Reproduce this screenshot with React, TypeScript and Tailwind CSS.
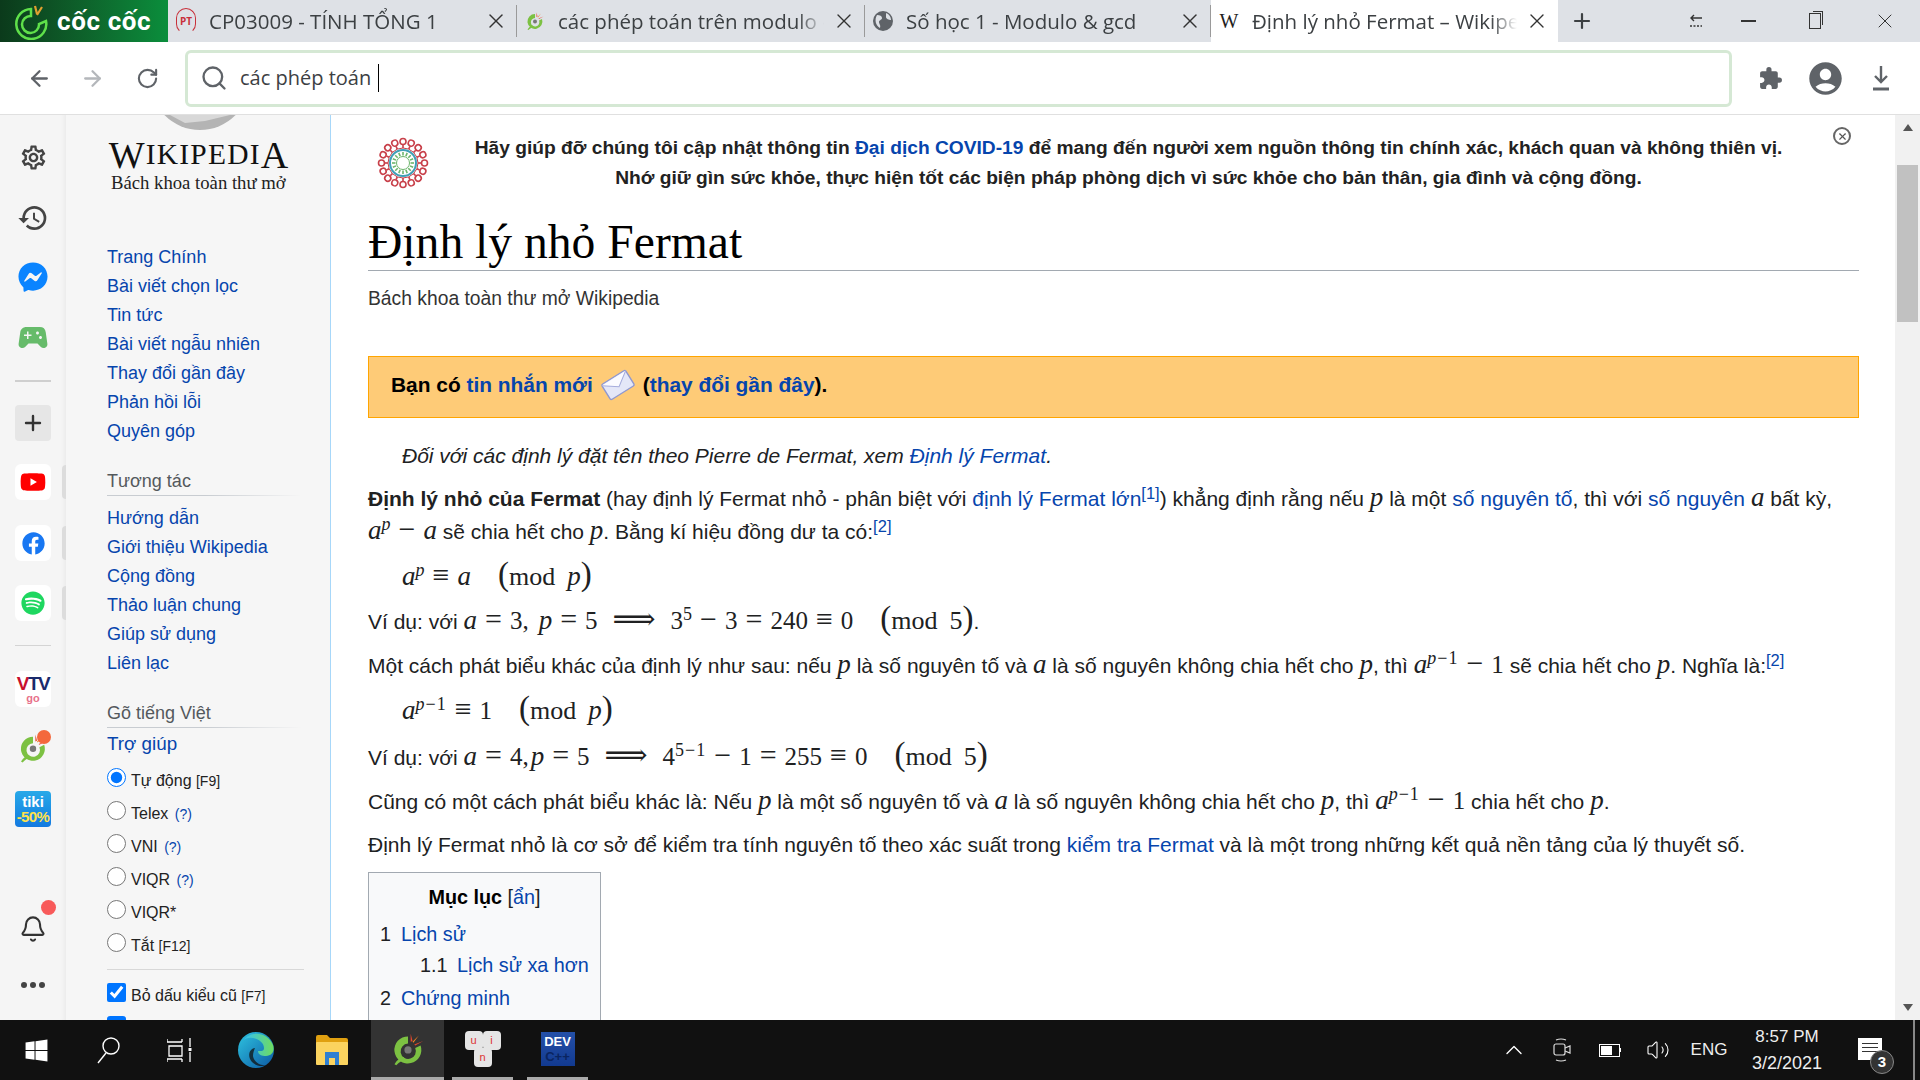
import React from "react";
import { ArrowLeft, ArrowRight, RotateCw, Search, Plus, Bell, X, ChevronUp, Volume2 } from "lucide-react";
import { MdExtension, MdAccountCircle, MdOutlineSettings, MdHistory, MdSportsEsports } from "react-icons/md";
import { FaFacebookMessenger, FaFacebook, FaSpotify, FaYoutube, FaWindows } from "react-icons/fa";

const Link = ({ children, className = "" }: { children: React.ReactNode; className?: string }) => (
  <span className={"text-[#0645ad] " + className}>{children}</span>
);
const I = ({ children, className = "" }: { children: React.ReactNode; className?: string }) => (
  <span className={"font-['Liberation_Serif','DejaVu_Serif',serif] italic text-[27px] leading-none " + className}>{children}</span>
);
const R = ({ children, className = "" }: { children: React.ReactNode; className?: string }) => (
  <span className={"font-['Liberation_Serif','DejaVu_Serif',serif] text-[25px] leading-none " + className}>{children}</span>
);
const Op = ({ children, wide }: { children: React.ReactNode; wide?: boolean }) => (
  <span className={"font-['Liberation_Serif','DejaVu_Serif',serif] text-[30px] leading-none " + (wide ? "mx-[15px]" : "mx-[8px]")}>{children}</span>
);
const Mod = ({ children }: { children: React.ReactNode }) => (
  <span className="ml-[27px] font-['Liberation_Serif','DejaVu_Serif',serif] leading-none">
    <span className="text-[33px] font-light leading-none">(</span>
    <span className="text-[26px] leading-none">mod</span>
    <span className="ml-[12px] text-[26px] leading-none">{children}</span>
    <span className="text-[33px] font-light leading-none">)</span>
  </span>
);
const Sup = ({ children, spaced }: { children: React.ReactNode; spaced?: boolean }) => (
  <sup className={"relative -top-[9px] align-baseline font-['Liberation_Serif','DejaVu_Serif',serif] text-[18px] leading-none " + (spaced ? "tracking-[1px]" : "")}>{children}</sup>
);
const Ref = ({ n }: { n: number }) => <sup className="relative -top-[7px] align-baseline text-[16.5px] leading-none text-[#0645ad]">[{n}]</sup>;

function CocIcon({ size = 40 }: { size?: number }) {
  return (
    <svg width={size} height={size} viewBox="0 0 40 40">
      <path d="M20 6a15 15 0 1 0 14 10l-6 3a8.5 8.5 0 1 1-8-5z" fill="#7cc142" />
      <path d="M5 37c3-5 6-7 10-8l2 3c-4 1-7 3-10 6z" fill="#7cc142" />
      <circle cx="20" cy="21" r="4" fill="#777" />
      <path d="M23 3l2 8-2 1z" fill="#e8472b" />
      <path d="M32 5l-6 8-1-1z" fill="#f58220" />
      <path d="M37 11l-9 5-1-1z" fill="#e8472b" />
    </svg>
  );
}

function Tab({ w, fav, title, active }: { w: string; fav: React.ReactNode; title: string; active?: boolean }) {
  return (
    <div className={"relative flex h-full shrink-0 items-center pl-[8px] " + w + (active ? " bg-white" : "")}>
      <div className="flex w-[20px] shrink-0 justify-center">{fav}</div>
      <div className="ml-[13px] min-w-0 flex-1 overflow-hidden whitespace-nowrap text-[20.5px] text-[#3c4043] [mask-image:linear-gradient(to_right,black_90%,transparent)]">{title}</div>
      <X size={24} strokeWidth={1.4} className="ml-[8px] mr-[9px] shrink-0 text-[#333]" />
      {!active && <div className="absolute right-0 top-[5px] h-[32px] w-px bg-[#9a9a9a]" />}
    </div>
  );
}

function Slot({ className, children }: { className: string; children: React.ReactNode }) {
  return <div className={"flex h-[36px] w-[36px] items-center justify-center self-center " + className}>{children}</div>;
}

function Handle() {
  return <div className="absolute left-[62px] top-[1px] h-[34px] w-[4px] rounded-l bg-[#dcdcdc]" />;
}

function Rail() {
  return (
    <div className="relative flex w-[66px] shrink-0 flex-col bg-[#f5f5f5] shadow-[inset_-6px_0_6px_-6px_rgba(0,0,0,0.08)]">
      <Slot className="mt-[24px]"><MdOutlineSettings size={29} className="text-[#444]" /></Slot>
      <Slot className="mt-[25px]"><MdHistory size={32} className="text-[#444]" /></Slot>
      <Slot className="mt-[23px]"><FaFacebookMessenger size={30} className="text-[#0a84ff]" /></Slot>
      <Slot className="mt-[24px]"><MdSportsEsports size={37} className="text-[#66bb6a]" /></Slot>
      <div className="mx-[15px] mt-[25px] h-[2px] bg-[#cfcfcf]" />
      <Slot className="mt-[23px] rounded bg-[#e6e6e6]"><Plus size={24} strokeWidth={2.4} className="text-[#333]" /></Slot>
      <div className="relative mt-[23px] flex justify-center">
        <Slot className="rounded-md bg-white"><FaYoutube size={26} className="text-[#ff0000]" /></Slot><Handle />
      </div>
      <div className="relative mt-[25px] flex justify-center">
        <Slot className="rounded-md bg-white"><FaFacebook size={23} className="text-[#1877f2]" /></Slot><Handle />
      </div>
      <div className="relative mt-[24px] flex justify-center">
        <Slot className="rounded-md bg-white"><FaSpotify size={24} className="text-[#1ed760]" /></Slot><Handle />
      </div>
      <div className="mx-[15px] mt-[24px] h-px bg-[#d4d4d4]" />
      <Slot className="mt-[25px] rounded-md bg-white">
        <div className="flex flex-col items-center leading-none">
          <span className="font-['Liberation_Sans'] text-[19px] font-bold tracking-[-1.5px] text-[#c8102e]">V<span className="text-[#1a2a6c]">TV</span></span>
          <span className="text-[11px] font-bold text-[#e8718a]">go</span>
        </div>
      </Slot>
      <Slot className="relative mt-[23px]">
        <CocIcon size={32} />
        <div className="absolute right-0 top-0 h-[14px] w-[14px] rounded-full bg-[#f4683c]" />
      </Slot>
      <Slot className="mt-[25px] rounded bg-gradient-to-b from-[#29a9e8] to-[#1479e0]">
        <div className="flex flex-col items-center font-['Liberation_Sans'] font-bold leading-none">
          <span className="text-[15px] text-white">tiki</span>
          <span className="text-[15px] tracking-[-0.6px] text-[#ffe14d]">-50%</span>
        </div>
      </Slot>
      <Slot className="relative mt-[84px]">
        <Bell size={28} strokeWidth={1.8} className="text-[#333]" />
        <div className="absolute right-[-5px] top-[-11px] h-[15px] w-[15px] rounded-full bg-[#f85a5a]" />
      </Slot>
      <div className="mt-[35px] flex justify-center gap-[3px]">
        <div className="h-[6px] w-[6px] rounded-full bg-[#444]" />
        <div className="h-[6px] w-[6px] rounded-full bg-[#444]" />
        <div className="h-[6px] w-[6px] rounded-full bg-[#444]" />
      </div>
    </div>
  );
}

function NavRow({ children }: { children: React.ReactNode }) {
  return <div className="flex h-[29px] items-center whitespace-nowrap text-[18px] text-[#0645ad]">{children}</div>;
}
function NavHead({ className, children }: { className: string; children: React.ReactNode }) {
  return (
    <div className={"relative flex h-[29px] items-center text-[18px] text-[#54595d] " + className}>
      {children}
      <div className="absolute bottom-0 left-0 h-px w-[195px] bg-gradient-to-r from-[#c8ccd1] via-[#c8ccd1] to-transparent" />
    </div>
  );
}
function RadioRow({ checked, children }: { checked?: boolean; children: React.ReactNode }) {
  return (
    <div className="flex h-[33px] items-center whitespace-nowrap text-[16px] text-[#222]">
      <input type="radio" name="tv" defaultChecked={checked} className="m-0 -mt-[7px] h-[19px] w-[19px]" />
      <span className="ml-[5px]">{children}</span>
    </div>
  );
}
const Q = () => <span className="ml-[2px] text-[14px] text-[#0645ad]">(?)</span>;

function WikiPanel() {
  return (
    <div className="w-[265px] shrink-0 border-r border-[#a7d7f9] bg-[#f6f6f6] pl-[41px]">
      <div className="ml-[43px] h-[15px] w-[100px] overflow-hidden">
        <svg width="100" height="15" viewBox="0 0 100 15">
          <circle cx="50" cy="-35" r="50" fill="#b4b4b4" />
          <path d="M20 0l15 8 20-2 25-6z" fill="#d8d8d8" />
        </svg>
      </div>
      <div className="ml-[1px] mt-[7px] flex h-[35px] w-[182px] items-center justify-center whitespace-nowrap font-['Liberation_Serif',serif] text-[38px] leading-none tracking-[1.2px] text-[#111]">
        W<span className="text-[29.5px]">IKIPEDI</span>A
      </div>
      <div className="ml-[4px] flex h-[22px] items-center whitespace-nowrap font-['Liberation_Serif',serif] text-[18.7px] text-[#222]">Bách khoa toàn thư mở</div>
      <div className="mt-[49px]">
        <NavRow>Trang Chính</NavRow>
        <NavRow>Bài viết chọn lọc</NavRow>
        <NavRow>Tin tức</NavRow>
        <NavRow>Bài viết ngẫu nhiên</NavRow>
        <NavRow>Thay đổi gần đây</NavRow>
        <NavRow>Phản hồi lỗi</NavRow>
        <NavRow>Quyên góp</NavRow>
      </div>
      <NavHead className="mt-[21px]">Tương tác</NavHead>
      <div className="mt-[8px]">
        <NavRow>Hướng dẫn</NavRow>
        <NavRow>Giới thiệu Wikipedia</NavRow>
        <NavRow>Cộng đồng</NavRow>
        <NavRow>Thảo luận chung</NavRow>
        <NavRow>Giúp sử dụng</NavRow>
        <NavRow>Liên lạc</NavRow>
      </div>
      <NavHead className="mt-[21px]">Gõ tiếng Việt</NavHead>
      <div className="mt-[2px]"><NavRow><span className="text-[18.8px]">Trợ giúp</span></NavRow></div>
      <div className="mt-[5px]">
        <RadioRow checked>Tự động <span className="text-[14px]">[F9]</span></RadioRow>
        <RadioRow>Telex <Q /></RadioRow>
        <RadioRow>VNI <Q /></RadioRow>
        <RadioRow>VIQR <Q /></RadioRow>
        <RadioRow>VIQR*</RadioRow>
        <RadioRow>Tắt <span className="text-[14px]">[F12]</span></RadioRow>
      </div>
      <div className="mt-[7px] h-px w-[197px] bg-[#d8d8d8]" />
      <div className="mt-[9px] flex h-[34px] items-center whitespace-nowrap text-[16px] text-[#222]">
        <input type="checkbox" defaultChecked className="m-0 -mt-[8px] h-[19px] w-[19px]" />
        <span className="ml-[5px]">Bỏ dấu kiểu cũ <span className="text-[14px]">[F7]</span></span>
      </div>
      <div className="mt-[3px] h-[19px] w-[19px] rounded-[3px] bg-[#0075ff]" />
    </div>
  );
}

function Virus() {
  const n = 16;
  return (
    <svg width="52" height="52" viewBox="-26 -26 52 52">
      {Array.from({ length: n }).map((_, i) => (
        <g key={i} transform={`rotate(${(i * 360) / n})`}>
          <circle cx="0" cy="-21.5" r="3" fill="none" stroke="#c8404a" strokeWidth="1.6" />
          <line x1="0" y1="-18" x2="0" y2="-15" stroke="#c8404a" strokeWidth="1.6" />
          <line x1="0" y1="-11" x2="0" y2="-7.5" stroke="#6cb56c" strokeWidth="1.6" />
        </g>
      ))}
      <circle r="15" fill="none" stroke="#c8404a" strokeWidth="1" />
      <circle r="13" fill="none" stroke="#3f9fb8" strokeWidth="2" />
      <circle r="6.5" fill="none" stroke="#6cb56c" strokeWidth="1" />
    </svg>
  );
}

function Envelope() {
  return (
    <svg width="36" height="36" viewBox="0 0 36 36" className="mx-[7px] shrink-0">
      <g transform="rotate(-32 18 18)">
        <rect x="4" y="9" width="28" height="18" rx="1.5" fill="#e4e7f8" stroke="#8f98d0" strokeWidth="1.4" />
        <path d="M4 10l14 10 14-10" fill="#fbfbff" stroke="#a5acdc" strokeWidth="1" />
      </g>
    </svg>
  );
}

function Article() {
  return (
    <div className="min-w-0 flex-1 bg-white pl-[37px] pr-[36px] text-[21px] text-[#202122]">
      <div className="relative flex items-start pt-[18px]">
        <div className="absolute left-[9px] top-[22px]"><Virus /></div>
        <div className="w-full pl-[30px] text-center text-[19.2px] font-bold leading-[30px] text-[#222]">
          <div className="whitespace-nowrap">Hãy giúp đỡ chúng tôi cập nhật thông tin <Link>Đại dịch COVID-19</Link> để mang đến người xem nguồn thông tin chính xác, khách quan và không thiên vị.</div>
          <div className="whitespace-nowrap">Nhớ giữ gìn sức khỏe, thực hiện tốt các biện pháp phòng dịch vì sức khỏe cho bản thân, gia đình và cộng đồng.</div>
        </div>
        <div className="absolute right-[8px] top-[12px] flex h-[18px] w-[18px] items-center justify-center rounded-full border-2 border-[#666] bg-white">
          <X size={11} strokeWidth={2.5} className="text-[#555]" />
        </div>
      </div>
      <h1 className="mt-[22px] flex h-[56px] items-center whitespace-nowrap border-b border-[#a2a9b1] font-['Liberation_Serif',serif] text-[47.6px] leading-none text-black">Định lý nhỏ Fermat</h1>
      <div className="mt-[16px] flex h-[24px] items-center text-[19.3px] text-[#333]">Bách khoa toàn thư mở Wikipedia</div>
      <div className="mt-[45px] flex h-[62px] items-center border border-[#ffa500] bg-[#fecb77] pb-[4px] pl-[22px] text-[20.9px] font-bold text-black">
        Bạn có&nbsp;<Link>tin nhắn mới</Link><Envelope />(<Link>thay đổi gần đây</Link>).
      </div>
      <div className="mt-[26px] flex h-[26px] items-center whitespace-nowrap pb-[2px] pl-[34px] italic text-[#202122]">
        Đối với các định lý đặt tên theo Pierre de Fermat, xem&nbsp;<Link>Định lý Fermat</Link>.
      </div>
      <div className="mt-[12px] whitespace-nowrap leading-[33px]">
        <div><b>Định lý nhỏ của Fermat</b> (hay định lý Fermat nhỏ - phân biệt với <Link>định lý Fermat lớn</Link><Ref n={1} />) khẳng định rằng nếu <I>p</I> là một <Link>số nguyên tố</Link>, thì với <Link>số nguyên</Link> <I>a</I> bất kỳ,</div>
        <div className="-mt-[1px]"><I>a</I><Sup><i>p</i></Sup><Op>−</Op><I>a</I> sẽ chia hết cho <I>p</I>. Bằng kí hiệu đồng dư ta có:<Ref n={2} /></div>
      </div>
      <div className="mt-[12px] flex h-[36px] items-center whitespace-pre pb-[5px] pl-[34px]">
        <span><I>a</I><Sup><i>p</i></Sup><Op>≡</Op><I>a</I><Mod><I>p</I></Mod></span>
      </div>
      <div className="mt-[8px] flex h-[36px] items-center whitespace-pre pb-[5px]">
        <span>Ví dụ: với <I>a</I><Op>=</Op><R>3,</R><I className="ml-[10px]">p</I><Op>=</Op><R>5</R><Op wide>⟹</Op><R>3</R><Sup>5</Sup><Op>−</Op><R>3</R><Op>=</Op><R>240</R><Op>≡</Op><R>0</R><Mod>5</Mod>.</span>
      </div>
      <div className="mt-[10px] flex h-[36px] items-center whitespace-pre pb-[7px]">
        <span>Một cách phát biểu khác của định lý như sau: nếu <I>p</I> là số nguyên tố và <I>a</I> là số nguyên không chia hết cho <I>p</I>, thì <I>a</I><Sup spaced><i>p</i>−1</Sup><Op>−</Op><R>1</R> sẽ chia hết cho <I>p</I>. Nghĩa là:<Ref n={2} /></span>
      </div>
      <div className="mt-[7px] flex h-[36px] items-center whitespace-pre pb-[2px] pl-[34px]">
        <span><I>a</I><Sup spaced><i>p</i>−1</Sup><Op>≡</Op><R>1</R><Mod><I>p</I></Mod></span>
      </div>
      <div className="mt-[10px] flex h-[36px] items-center whitespace-pre pb-[2px]">
        <span>Ví dụ: với <I>a</I><Op>=</Op><R>4,</R><I className="ml-[2px]">p</I><Op>=</Op><R>5</R><Op wide>⟹</Op><R>4</R><Sup spaced>5−1</Sup><Op>−</Op><R>1</R><Op>=</Op><R>255</R><Op>≡</Op><R>0</R><Mod>5</Mod></span>
      </div>
      <div className="mt-[10px] flex h-[36px] items-center whitespace-pre pb-[5px]">
        <span>Cũng có một cách phát biểu khác là: Nếu <I>p</I> là một số nguyên tố và <I>a</I> là số nguyên không chia hết cho <I>p</I>, thì <I>a</I><Sup spaced><i>p</i>−1</Sup><Op>−</Op><R>1</R> chia hết cho <I>p</I>.</span>
      </div>
      <div className="mt-[10px] flex h-[30px] items-center whitespace-pre pb-[2px]">
        <span>Định lý Fermat nhỏ là cơ sở để kiểm tra tính nguyên tố theo xác suất trong <Link>kiểm tra Fermat</Link> và là một trong những kết quả nền tảng của lý thuyết số.</span>
      </div>
      <div className="mt-[11px] w-[233px] border border-[#a2a9b1] bg-[#f8f9fa] pb-[20px] text-[19.8px]">
        <div className="mt-[12px] flex h-[26px] items-center justify-center"><b className="text-black">Mục lục</b>&nbsp;[<Link>ẩn</Link>]</div>
        <div className="mt-[10px] flex h-[28px] items-center pl-[11px]"><span className="w-[21px]">1</span><Link>Lịch sử</Link></div>
        <div className="mt-[3px] flex h-[28px] items-center pl-[51px]"><span className="w-[37px]">1.1</span><Link>Lịch sử xa hơn</Link></div>
        <div className="mt-[5px] flex h-[28px] items-center pl-[11px]"><span className="w-[21px]">2</span><Link>Chứng minh</Link></div>
      </div>
    </div>
  );
}

function Scrollbar() {
  return (
    <div className="flex w-[25px] shrink-0 flex-col items-center bg-[#f1f1f1]">
      <div className="mt-[9px] h-0 w-0 border-x-[5px] border-b-[7px] border-x-transparent border-b-[#555]" />
      <div className="mt-[34px] h-[157px] w-[21px] bg-[#c1c1c1]" />
      <div className="flex-1" />
      <div className="mb-[9px] h-0 w-0 border-x-[5px] border-t-[7px] border-x-transparent border-t-[#555]" />
    </div>
  );
}

function TrayIcon({ w, children }: { w: string; children: React.ReactNode }) {
  return <div className={"flex h-full shrink-0 items-center justify-center " + w}>{children}</div>;
}

function Taskbar() {
  return (
    <div className="flex h-[60px] shrink-0 items-stretch bg-[#111] text-white">
      <TrayIcon w="w-[72px]"><FaWindows size={25} /></TrayIcon>
      <TrayIcon w="w-[74px]">
        <svg width="26" height="28" viewBox="0 0 26 28" fill="none" stroke="#fff" strokeWidth="1.4"><circle cx="15" cy="10" r="8" /><path d="M10 17L2 27" /></svg>
      </TrayIcon>
      <TrayIcon w="w-[68px]">
        <svg width="26" height="24" viewBox="0 0 26 24" fill="none" stroke="#fff" strokeWidth="1.3"><path d="M0 4h15M0 1v3M15 1v3M2 8h13v10H2zM0 21h15M0 24v-3M15 24v-3M23 0v9M23 14v10" /><rect x="21.5" y="10" width="3" height="3" fill="#fff" stroke="none" /></svg>
      </TrayIcon>
      <TrayIcon w="ml-[6px] w-[72px]">
        <svg width="38" height="38" viewBox="0 0 38 38">
          <defs>
            <linearGradient id="eg" x1="0" y1="0" x2="1" y2="1"><stop offset="0" stopColor="#2ec4e0" /><stop offset="1" stopColor="#0c59a4" /></linearGradient>
            <linearGradient id="eg2" x1="0" y1="0" x2="1" y2="0"><stop offset="0" stopColor="#35c1f1" /><stop offset="1" stopColor="#6fdc5e" /></linearGradient>
          </defs>
          <circle cx="19" cy="19" r="18" fill="url(#eg)" />
          <path d="M7 9C13 0 30 0 36 14c2 6-1 11-7 11-4 0-8-1-8-5 2 0 6 1 6-3C27 8 12 4 7 9z" fill="url(#eg2)" />
          <path d="M18 17c-6 1-8 8-3 14 4 4 10 5 14 3-6 1-12-3-13-9 0-3 1-6 2-8z" fill="#111" opacity="0.75" />
        </svg>
      </TrayIcon>
      <TrayIcon w="ml-[4px] w-[72px]">
        <svg width="32" height="30" viewBox="0 0 32 30">
          <path d="M0 2q0-2 2-2h9l3 3h16q2 0 2 2v4H0z" fill="#e0a010" />
          <rect y="7" width="32" height="23" rx="1" fill="#fbd35f" />
          <rect x="9" y="17" width="14" height="13" fill="#2f7fd1" />
          <rect x="13" y="23" width="6" height="7" fill="#fbd35f" />
        </svg>
      </TrayIcon>
      <TrayIcon w="ml-[3px] w-[73px] bg-[#333] border-b-[3px] border-[#aaa]"><CocIcon size={36} /></TrayIcon>
      <TrayIcon w="ml-[8px] w-[61px] border-b-[3px] border-[#aaa]">
        <div className="relative h-[36px] w-[36px]">
          <div className="absolute left-0 top-0 flex h-[19px] w-[18px] items-center justify-center rounded-sm bg-[#e5e5e5] text-[11px] text-[#d33]">u</div>
          <div className="absolute right-0 top-0 flex h-[19px] w-[18px] items-center justify-center rounded-sm bg-[#e5e5e5] text-[11px] text-[#d33]">i</div>
          <div className="absolute bottom-0 left-[9px] flex h-[19px] w-[18px] items-center justify-center rounded-sm bg-[#e5e5e5] text-[11px] text-[#d33]">n</div>
        </div>
      </TrayIcon>
      <TrayIcon w="ml-[14px] w-[61px] border-b-[3px] border-[#aaa]">
        <div className="flex h-[34px] w-[34px] flex-col items-center justify-center bg-gradient-to-b from-[#2450a8] to-[#123a90] font-['Liberation_Sans'] text-[13px] font-bold leading-[15px]">
          <span className="text-white">DEV</span>
          <span className="text-[#0a2460]">C++</span>
        </div>
      </TrayIcon>
      <div className="flex-1" />
      <TrayIcon w="w-[48px]"><ChevronUp size={28} strokeWidth={1.2} /></TrayIcon>
      <TrayIcon w="w-[48px]">
        <svg width="18" height="24" viewBox="0 0 18 24" fill="none" stroke="#ddd" strokeWidth="1.2"><rect x="1" y="6" width="11" height="11" rx="2" /><path d="M12 10l5-2v7l-5-2M3 2q5-2 10 0M3 22q5 2 10 0" /></svg>
      </TrayIcon>
      <TrayIcon w="w-[48px]">
        <div className="flex items-center"><div className="h-[13px] w-[21px] border border-white p-[1px]"><div className="h-full w-[11px] bg-white" /></div><div className="h-[4px] w-[1px] bg-white" /></div>
      </TrayIcon>
      <TrayIcon w="w-[47px]"><Volume2 size={24} strokeWidth={1.1} /></TrayIcon>
      <TrayIcon w="w-[56px]"><span className="text-[17px] text-[#eee]">ENG</span></TrayIcon>
      <div className="flex w-[100px] shrink-0 flex-col items-center justify-center text-[17px] leading-[27px] text-[#eee]">
        <span>8:57 PM</span>
        <span className="text-[18px]">3/2/2021</span>
      </div>
      <div className="relative w-[66px] shrink-0">
        <div className="absolute left-[21px] top-[18px] flex h-[22px] w-[24px] flex-col gap-[3px] bg-white px-[4px] pt-[5px]">
          <div className="h-px bg-[#333]" /><div className="h-px bg-[#333]" /><div className="h-px bg-[#333]" />
        </div>
        <div className="absolute left-[33px] top-[30px] flex h-[24px] w-[24px] items-center justify-center rounded-full border border-[#888] bg-[#333] text-[15px] font-bold">3</div>
      </div>
      <div className="ml-[10px] mr-[5px] w-[2px] bg-[#888]" />
    </div>
  );
}

export default function App() {
  return (
    <div className="flex h-[1080px] w-[1920px] flex-col overflow-hidden bg-white font-['Liberation_Sans','DejaVu_Sans',sans-serif]">
      <div className="flex h-[42px] shrink-0 items-center bg-[#dee1e6] font-['Open_Sans',sans-serif]">
        <div className="flex h-full w-[168px] shrink-0 items-center bg-gradient-to-r from-[#0b3a1b] to-[#0a8e3c] pl-[11px]">
          <svg width="42" height="38" viewBox="0 0 42 38" fill="none" className="shrink-0">
            <path d="M20 7a15 15 0 1 0 15 12l-7 3a8.5 8.5 0 1 1-8-8z" stroke="#5fe04a" strokeWidth="2.5" />
            <path d="M24 4l2 8M31 5l-5 8" stroke="#e0a030" strokeWidth="2.2" />
          </svg>
          <span className="ml-[4px] whitespace-nowrap font-['Roboto'] text-[26px] font-bold tracking-[0.6px] text-white">cốc cốc</span>
        </div>
        <Tab w="w-[349px]" fav={
          <div className="relative flex h-[26px] w-[20px] items-center justify-center">
            <div className="absolute inset-0 rounded-full border border-[#c8303a] border-b-transparent" />
            <span className="text-[10px] font-bold text-[#c8303a]">PT</span>
          </div>
        } title="CP03009 - TÍNH TỔNG 1" />
        <Tab w="w-[348px]" fav={<CocIcon size={26} />} title="các phép toán trên modulo - " />
        <Tab w="w-[346px]" fav={
          <svg width="20" height="20" viewBox="0 0 20 20"><circle cx="10" cy="10" r="10" fill="#5f6368" /><path d="M4 4c3 0 5 1 5 3s-3 2-3 4 2 3 1 6C3 15 1 9 4 4zM13 2c3 1 5 4 5 7-2 0-5-1-5-3z" fill="#dee1e6" /></svg>
        } title="Số học 1 - Modulo & gcd" />
        <Tab w="w-[347px]" active fav={<span className="font-['Liberation_Serif'] text-[20px] text-[#222]">W</span>} title="Định lý nhỏ Fermat – Wikipe" />
        <div className="flex w-[48px] justify-center"><Plus size={24} strokeWidth={2.2} className="text-[#3c4043]" /></div>
        <div className="flex-1" />
        <svg width="14" height="14" viewBox="0 0 14 14" fill="none" stroke="#333" strokeWidth="1.4" className="shrink-0"><path d="M13 4H2M5 1L2 4l3 3" /><path d="M1 12h12" strokeDasharray="2 1.5" /></svg>
        <div className="ml-[38px] h-[1.5px] w-[15px] bg-[#333]" />
        <div className="relative ml-[53px] h-[16px] w-[12px] border border-[#333] bg-[#dee1e6]">
          <div className="absolute -right-[3px] -top-[3px] -z-0 h-[14px] w-[10px] border-r border-t border-[#333]" />
        </div>
        <X size={24} strokeWidth={1} className="ml-[52px] mr-[23px] text-[#333]" />
      </div>
      <div className="flex h-[73px] shrink-0 items-center border-b border-[#e0e0e0] bg-white font-['Open_Sans',sans-serif]">
        <ArrowLeft size={25} strokeWidth={2.2} className="ml-[27px] text-[#5f6368]" />
        <ArrowRight size={25} strokeWidth={2.2} className="ml-[28px] text-[#b4b7bb]" />
        <RotateCw size={23} strokeWidth={2.2} className="ml-[31px] text-[#5f6368]" />
        <div className="ml-[26px] flex h-[57px] w-[1547px] items-center rounded-[6px] border-[3px] border-[#d5e8d4] pl-[12px]">
          <Search size={28} strokeWidth={2} className="text-[#5f6368]" />
          <span className="ml-[12px] whitespace-nowrap text-[20px] text-[#3c4043]">các phép toán</span>
          <div className="ml-[7px] h-[28px] w-px bg-black" />
        </div>
        <MdExtension size={25} className="ml-[26px] text-[#5f6368]" />
        <MdAccountCircle size={39} className="ml-[23px] text-[#5f6368]" />
        <svg width="20" height="28" viewBox="0 0 20 28" className="ml-[26px]" fill="none" stroke="#5f6368" strokeWidth="2.4"><path d="M10 2v16M4 12l6 6 6-6" /><path d="M2 25h16" strokeWidth="3" /></svg>
      </div>
      <div className="flex min-h-0 flex-1 overflow-hidden">
        <Rail />
        <WikiPanel />
        <Article />
        <Scrollbar />
      </div>
      <Taskbar />
    </div>
  );
}
